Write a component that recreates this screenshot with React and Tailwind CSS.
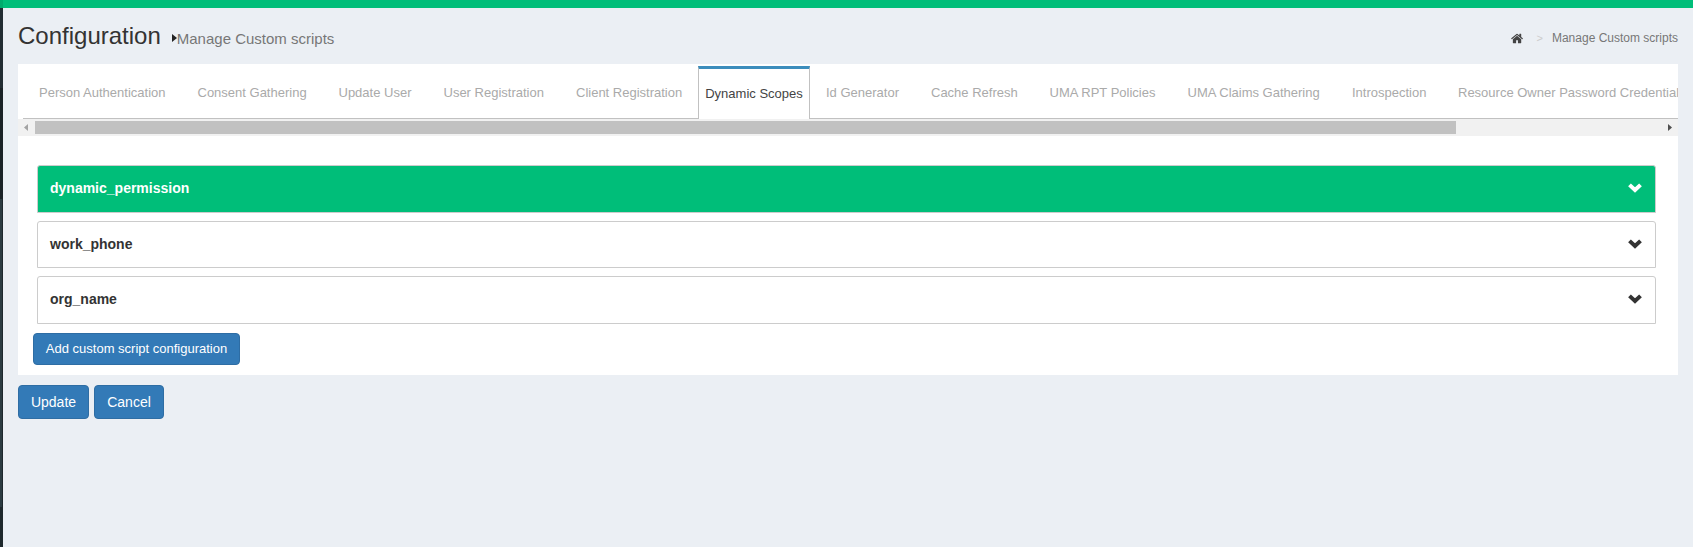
const tabs = [
  { label: "Person Authentication", box: "w-[158.5px]" },
  { label: "Consent Gathering", box: "w-[141px]" },
  { label: "Update User", box: "w-[105px]" },
  { label: "User Registration", box: "w-[132.5px]" },
  { label: "Client Registration", box: "w-[122px]" },
  { label: "Dynamic Scopes", active: true },
  { label: "Id Generator", box: "w-[105px] ml-4" },
  { label: "Cache Refresh", box: "w-[118.5px]" },
  { label: "UMA RPT Policies", box: "w-[138px]" },
  { label: "UMA Claims Gathering", box: "w-[164.5px]" },
  { label: "Introspection", box: "w-[106px]" },
  { label: "Resource Owner Password Credentials", box: "w-[260px]" },
];

const scripts = [
  { name: "dynamic_permission", look: "h-12 mb-2 bg-[#00be79] text-white", pad: "pb-px" },
  { name: "work_phone", look: "h-[47px] mb-2 bg-white text-[#333]", pad: "" },
  { name: "org_name", look: "h-12 bg-white text-[#333]", pad: "pb-px" },
];

function Tab({ label, box, active }) {
  if (active) {
    return (
      <div className="flex h-[53px] w-28 shrink-0 items-center justify-center border-x border-t-3 border-x-[#c1c1c1] border-t-[#3c8dbc] bg-white text-[#444]">
        {label}
      </div>
    );
  }
  return (
    <div className={`flex h-[53px] shrink-0 items-center pt-px ${box}`}>
      {label}
    </div>
  );
}

function HomeIcon() {
  return (
    <svg viewBox="0 0 1792 1792" className="mr-[13px] size-[13px] fill-[#444]">
      <path d="M1408 992v480q0 26-19 45t-45 19h-384v-384h-256v384h-384q-26 0-45-19t-19-45v-480q0-1 .5-3t.5-3l575-474 575 474q1 2 1 6zm223-69l-62 74q-8 9-21 11h-3q-13 0-21-7l-692-577-692 577q-12 8-24 7-13-2-21-11l-62-74q-8-10-7-23.5t11-21.5l719-599q32-26 76-26t76 26l244 204v-195q0-14 9-23t23-9h192q14 0 23 9t9 23v408l219 182q10 8 11 21.5t-7 23.5z" />
    </svg>
  );
}

function Chevron() {
  return (
    <svg viewBox="0 0 14 10" className="mb-[2px] h-[10px] w-[14px]" fill="none" stroke="currentColor" strokeWidth="4">
      <path d="M1.5 1.9 L7 7 L12.5 1.9" />
    </svg>
  );
}

function Button({ children, size }) {
  return (
    <button className={`flex items-center justify-center rounded-[4px] border border-[#2e6da4] bg-[#337ab7] text-white ${size}`}>
      {children}
    </button>
  );
}

export default function App() {
  return (
    <div className="flex h-[547px] w-[1693px] flex-col overflow-hidden bg-[#ebeff4] font-['Liberation_Sans',Arial,sans-serif]">
      <div className="h-2 shrink-0 border-l-3 border-[#00ab6d] bg-[#00be79]" />
      <div className="flex flex-1">
        <aside className="flex w-[3px] flex-col">
          <div className="h-20 bg-[#222d32]" />
          <div className="h-[111px] bg-[#1a2226]" />
          <div className="h-[308px] border-r border-[#1e282c] bg-[#2c3b41]" />
          <div className="flex-1 bg-[#1e282c]" />
        </aside>
        <main className="w-[1675px] pl-[15px]">
          <header className="flex h-14 w-[1660px] justify-between">
            <h1 className="flex items-baseline pt-[10px] text-[24px] leading-9 text-[#333]">
              Configuration
              <svg viewBox="0 0 5 8" className="ml-[11px] h-2 w-[5px] -translate-y-[2px] fill-[#222]">
                <path d="M0 0 L5 4 L0 8Z" />
              </svg>
              <small className="text-[15px] text-[#777]">Manage Custom scripts</small>
            </h1>
            <nav className="flex items-center pt-[4px] text-[12px] text-[#777]">
              <HomeIcon />
              <span className="mr-[9px] text-[11px] text-[#ccc]">&gt;</span>
              <span>Manage Custom scripts</span>
            </nav>
          </header>

          <section className="h-[311px] w-[1660px] bg-white">
            <div className="h-[55px] overflow-hidden pl-[5px] pt-[2px]">
              <div className="flex h-[53px] items-end whitespace-nowrap bg-[linear-gradient(#c1c1c1,#c1c1c1)] bg-[length:100%_1px] bg-bottom bg-no-repeat pl-4 text-[13px] text-[#aaa]">
                {tabs.map((t) => (
                  <Tab key={t.label} {...t} />
                ))}
              </div>
            </div>
            <div className="flex h-[17px] items-center bg-[#f1f1f1]">
              <svg viewBox="0 0 17 17" className="size-[17px]" fill="#a3a3a3">
                <path d="M10 5 V12 L6 8.5Z" />
              </svg>
              <div className="h-[13px] w-[1421px] bg-[#c1c1c1]" />
              <svg viewBox="0 0 17 17" className="ml-auto size-[17px]" fill="#505050">
                <path d="M7 5 V12 L11 8.5Z" />
              </svg>
            </div>

            <div className="pl-[19px] pt-[29px]">
              {scripts.map((s) => (
                <div
                  key={s.name}
                  className={`flex w-[1619px] items-center justify-between rounded-t-[3px] border border-[#ccc] pl-3 pr-[13px] text-[14px] font-bold ${s.look}`}
                >
                  <span className={s.pad}>{s.name}</span>
                  <Chevron />
                </div>
              ))}
            </div>
            <div className="pl-[15px] pt-[9px]">
              <Button size="h-8 w-[207px] text-[13px]">Add custom script configuration</Button>
            </div>
          </section>

          <div className="flex gap-[5px] pt-[10px]">
            <Button size="h-[34px] w-[71px] text-[14px]">Update</Button>
            <Button size="h-[34px] w-[70px] text-[14px]">Cancel</Button>
          </div>
        </main>
      </div>
    </div>
  );
}
